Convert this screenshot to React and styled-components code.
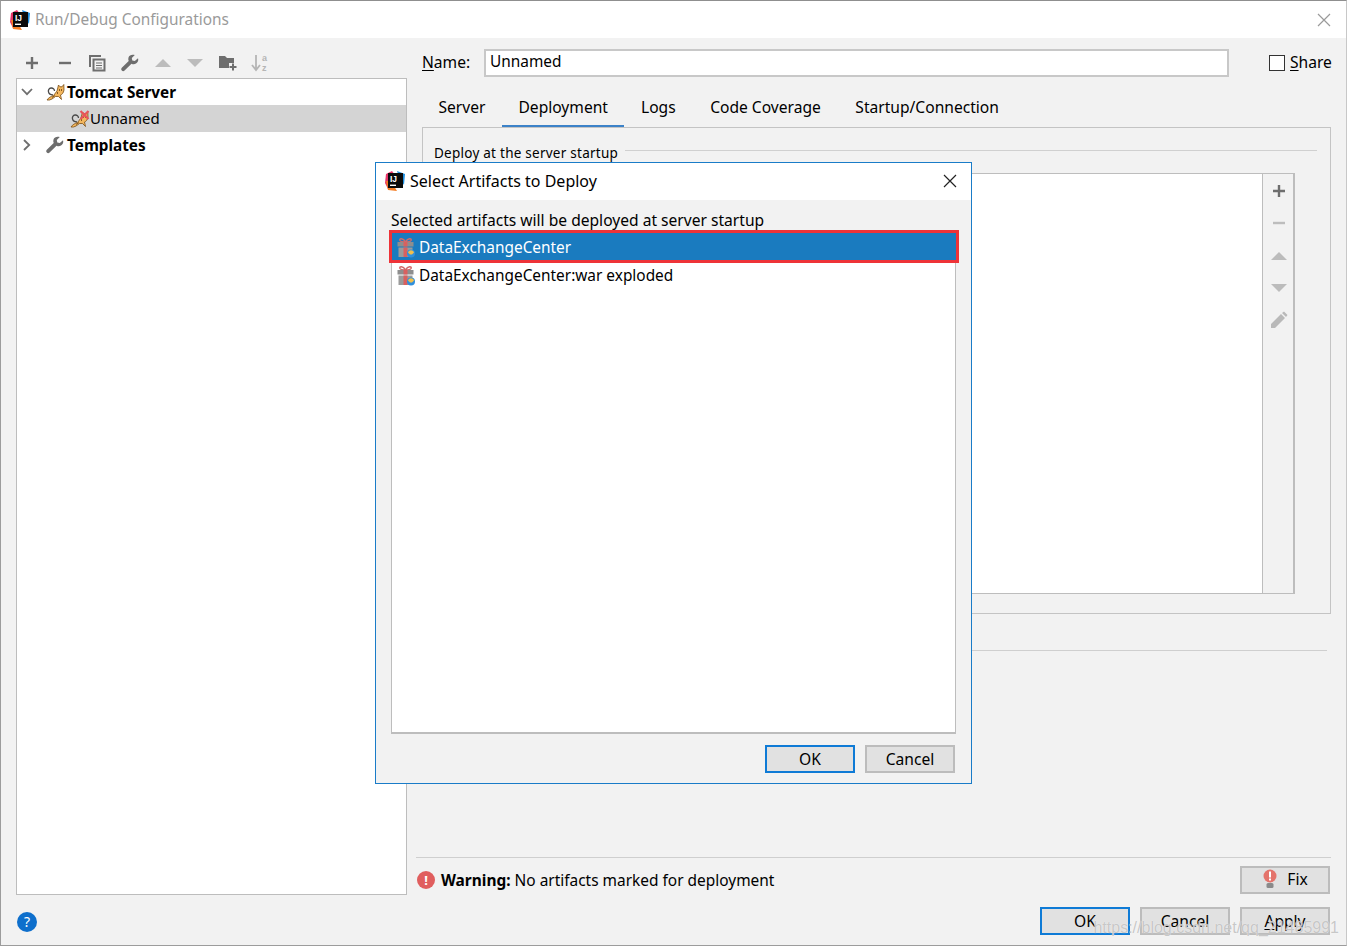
import React from "react";
import styled, { createGlobalStyle } from "styled-components";

const Global = createGlobalStyle`
  html, body { margin: 0; padding: 0; background: #f2f2f2; }
  body { font-family: "Noto Sans", "Open Sans", sans-serif; font-size: 15.6px; color: #000; }
  * { box-sizing: border-box; }
`;

const Window = styled.div`
  position: relative;
  width: 1347px;
  height: 946px;
  background: #f2f2f2;
  border: 1px solid #9c9c9c;
  border-top-color: #8f8f8f;
  border-right-color: #c8c8c8;
  display: flex;
  flex-direction: column;
  overflow: hidden;
`;
const TitleBar = styled.div`
  height: 37px;
  flex: none;
  background: #fff;
  display: flex;
  align-items: center;
  padding: 0 12px 0 9px;
  gap: 5px;
`;
const TitleText = styled.span`
  color: ${(p) => p.$color || "#9a9a9a"};
  font-size: ${(p) => p.$size || 15.4}px;
  line-height: 20px;
  flex: 1;
`;
const Close = styled.button`
  width: 20px;
  height: 20px;
  padding: 0;
  border: 0;
  background: none;
  display: flex;
  align-items: center;
  justify-content: center;
`;
const Main = styled.div`
  flex: 1;
  display: flex;
  min-height: 0;
  padding: 0 15px 0 15px;
`;
const LeftCol = styled.div`
  width: 391px;
  flex: none;
  display: flex;
  flex-direction: column;
`;
const Toolbar = styled.div`
  height: 40px;
  flex: none;
  display: flex;
  align-items: center;
  padding: 10px 0 0 4px;
  gap: 8.7px;
`;
const ToolSlot = styled.span`
  width: 24px;
  height: 24px;
  display: flex;
  align-items: center;
  justify-content: center;
`;
const Tree = styled.div`
  height: 817px;
  flex: none;
  background: #fff;
  border: 1px solid #bdbdbd;
`;
const TreeRow = styled.div`
  height: ${(p) => p.$h}px;
  display: flex;
  align-items: center;
  padding-left: ${(p) => p.$indent}px;
  background: ${(p) => (p.$selected ? "#d4d4d4" : "transparent")};
  font-weight: ${(p) => (p.$bold ? 700 : 400)};
  font-size: ${(p) => (p.$bold ? 15.3 : 15)}px;
`;
const TreeLabel = styled.span`
  padding-bottom: 2px;
`;
const Chevron = styled.span`
  width: 20px;
  margin-right: 9px;
  display: flex;
  justify-content: center;
`;
const TreeIcon = styled.span`
  width: 21px;
  flex: none;
  display: flex;
  align-items: center;
`;
const HelpCircle = styled.div`
  width: 20px;
  height: 20px;
  margin: 17px 0 0 1px;
  border-radius: 50%;
  background: #0e6fcc;
  color: #fff;
  font-size: 14px;
  line-height: 20px;
  text-align: center;
`;
const RightCol = styled.div`
  flex: 1;
  min-width: 0;
  display: flex;
  flex-direction: column;
`;
const NameRow = styled.div`
  height: 28px;
  margin-top: 11px;
  display: flex;
  align-items: center;
  padding-left: 15px;
`;
const NameLabel = styled.span`
  width: 62px;
  flex: none;
  padding-bottom: 2px;
`;
const ShareLabel = styled.span`
  flex: none;
  padding-bottom: 2px;
  white-space: nowrap;
`;
const U = styled.span`
  text-decoration: underline;
  text-underline-offset: 2px;
`;
const NameInput = styled.div`
  width: 745px;
  height: 28px;
  flex: none;
  background: #fff;
  border: 2px solid #c8c8c8;
  padding: 0 4px;
  font-size: 15.4px;
  line-height: 22px;
`;
const ShareBox = styled.span`
  width: 16px;
  height: 16px;
  margin-left: 40px;
  margin-right: 5px;
  background: #fff;
  border: 1px solid #333;
  flex: none;
`;
const Tabs = styled.div`
  height: 40px;
  margin-top: 11px;
  margin-left: 15px;
  display: flex;
`;
const Tab = styled.div`
  height: 40px;
  padding: 0 ${(p) => p.$pad ?? 16.5}px;
  line-height: 38px;
  border-bottom: 3px solid ${(p) => (p.$active ? "#3c82c8" : "transparent")};
`;
const Panel = styled.div`
  margin: -1px 0 0 15px;
  width: 909px;
  height: 487px;
  border: 1px solid #c4c4c4;
  padding: 15px 12px 0 11px;
`;
const FieldLegend = styled.div`
  display: flex;
  align-items: center;
  font-size: 13.5px;
  letter-spacing: 0.25px;
  line-height: 20px;
  height: 20px;
  gap: 7px;
  margin-right: 1px;
`;
const LegendLine = styled.span`
  flex: 1;
  height: 1px;
  margin-top: -6px;
  background: #d0d0d0;
`;
const DeployBox = styled.div`
  width: 861px;
  height: 421px;
  margin-top: 10px;
  background: #fff;
  border: 1px solid #bdbdbd;
  border-right-width: 2px;
  display: flex;
  justify-content: flex-end;
`;
const DeployTools = styled.div`
  width: 31px;
  background: #f2f2f2;
  border-left: 1px solid #bdbdbd;
  display: flex;
  flex-direction: column;
  align-items: center;
  padding: 5px 0 0 1px;
  gap: 8.3px;
`;
const Rule = styled.div`
  height: 1px;
  background: #cfcfcf;
  margin-left: ${(p) => p.$left}px;
  margin-right: ${(p) => p.$right}px;
  margin-top: ${(p) => p.$top}px;
`;
const WarnRow = styled.div`
  height: 37px;
  margin-top: 3px;
  display: flex;
  align-items: center;
  padding: 0 1px 0 10px;
`;
const WarnIcon = styled.span`
  width: 18px;
  height: 18px;
  border-radius: 50%;
  background: #e05e5e;
  color: #fff;
  font-weight: 700;
  font-size: 13px;
  line-height: 18px;
  text-align: center;
  margin-right: 6px;
  flex: none;
`;
const WarnText = styled.span`
  flex: 1;
  font-size: 15.45px;
`;
const Btn = styled.button`
  width: 90px;
  height: 28px;
  background: #e1e1e1;
  border: 2px solid ${(p) => (p.$default ? "#0f7bd6" : "#bcbcbc")};
  font: inherit;
  font-size: 15.6px;
  color: #000;
  padding: 0 0 1px;
  display: flex;
  align-items: center;
  justify-content: center;
  gap: 9px;
`;
const ActionRow = styled.div`
  display: flex;
  justify-content: flex-end;
  gap: 10px;
  padding-right: 1px;
  margin-top: ${(p) => p.$top ?? 0}px;
`;
const Dialog = styled.div`
  position: absolute;
  left: 374px;
  top: 161px;
  width: 597px;
  height: 622px;
  background: #f2f2f2;
  border: 1px solid #1a7cc8;
  display: flex;
  flex-direction: column;
`;
const DialogTitle = styled.div`
  height: 37px;
  flex: none;
  background: #fff;
  display: flex;
  align-items: center;
  padding: 0 11px 2px 9px;
  gap: 5px;
`;
const DialogBody = styled.div`
  flex: 1;
  padding: 10px 15px 10px 15px;
  display: flex;
  flex-direction: column;
`;
const DialogLabel = styled.div`
  height: 20px;
  line-height: 20px;
`;
const List = styled.div`
  width: 565px;
  height: 504px;
  background: #fff;
  border: 1px solid #bdbdbd;
  border-bottom-width: 2px;
`;
const ListRow = styled.div`
  height: ${(p) => p.$h}px;
  display: flex;
  align-items: center;
  padding-left: ${(p) => (p.$selected ? 6 : 4)}px;
  padding-top: ${(p) => (p.$selected ? 2 : 0)}px;
  gap: 3px;
  font-size: 15.4px;
  background: ${(p) => (p.$selected ? "#1a7bbf" : "transparent")};
  color: ${(p) => (p.$selected ? "#fff" : "#000")};
  ${(p) =>
    p.$selected &&
    "margin: 0 -3px 0 -2px; outline: 3px solid #ee3338; outline-offset: -2px; position: relative;"}
`;
const Watermark = styled.div`
  position: absolute;
  right: 7px;
  bottom: 8px;
  font-family: "Liberation Sans", sans-serif;
  font-size: 16px;
  color: rgba(185, 185, 185, 0.8);
  text-shadow: 0 0 1px #fff;
  pointer-events: none;
`;

const IJ = () => (
  <svg width="20" height="20" viewBox="0 0 20 20">
    <path d="M1 3 L7 0 L10 4 L3 18 L0 12Z" fill="#e8356a" />
    <path d="M12 0 L20 3 L19 14 L14 6Z" fill="#1d8fe1" />
    <path d="M1 10 L3 19 L12 20 L6 10Z" fill="#f57d23" />
    <rect x="3" y="2" width="15" height="15" fill="#0a0a0a" />
    <rect x="5" y="13.6" width="6" height="1.4" fill="#fff" />
    <text x="5" y="11" fontFamily="Liberation Sans, sans-serif" fontWeight="700" fontSize="8.5" fill="#fff">IJ</text>
  </svg>
);
const X = ({ c = "#8a8a8a", s = 14, w = 1.2 }) => (
  <svg width={s} height={s} viewBox="0 0 14 14">
    <path d="M1 1 L13 13 M13 1 L1 13" stroke={c} strokeWidth={w} fill="none" />
  </svg>
);
const Plus = ({ c = "#6e6e6e" }) => (
  <svg width="14" height="14" viewBox="0 0 14 14"><path d="M7 1V13M1 7H13" stroke={c} strokeWidth="2.4" /></svg>
);
const Minus = ({ c = "#6e6e6e" }) => (
  <svg width="14" height="14" viewBox="0 0 14 14"><path d="M1 7H13" stroke={c} strokeWidth="2.4" /></svg>
);
const Copy = () => (
  <svg width="18" height="18" viewBox="0 0 18 18" fill="none">
    <path d="M13 2H2V13" stroke="#6e6e6e" strokeWidth="2" />
    <rect x="5.5" y="5.5" width="11" height="11" stroke="#6e6e6e" strokeWidth="2" />
    <path d="M8 9H14M8 11.5H14M8 14H14" stroke="#6e6e6e" strokeWidth="1.2" />
  </svg>
);
const Wrench = ({ s = 18 }) => (
  <svg width={s} height={s} viewBox="0 0 18 18">
    <path d="M17 4.2 L13.8 7 L11.3 6.5 L10.8 4 L13.8 1.1 C11.3 0 8.3 1 7.5 3.4 C7.1 4.6 7.2 5.8 7.7 6.9 L0.8 13.8 C0 14.7 0 15.7 0.8 16.6 C1.6 17.4 2.7 17.4 3.6 16.6 L10.5 9.7 C12.9 10.9 15.5 10 16.7 7.8 C17.3 6.7 17.4 5.4 17 4.2Z" fill="#6e6e6e" />
  </svg>
);
const Tri = ({ dir = "up", c = "#bcbcbc" }) => (
  <svg width="16" height="10" viewBox="0 0 16 10">
    <path d={dir === "up" ? "M0 9 L8 1 L16 9Z" : "M0 1 L16 1 L8 9Z"} fill={c} />
  </svg>
);
const FolderPlus = () => (
  <svg width="19" height="16" viewBox="0 0 19 16">
    <path d="M0 1H6L8 3H15V8H10V13H0Z" fill="#6e6e6e" />
    <path d="M14 8.5V15.5M10.5 12H17.5" stroke="#6e6e6e" strokeWidth="2" />
  </svg>
);
const SortAZ = () => (
  <svg width="19" height="18" viewBox="0 0 19 18" fill="none">
    <path d="M5 1V15M1 11L5 16L9 11" stroke="#b5b5b5" strokeWidth="1.8" />
    <text x="11" y="7" fontFamily="Liberation Sans, sans-serif" fontWeight="700" fontSize="9" fill="#b5b5b5">a</text>
    <text x="11" y="17" fontFamily="Liberation Sans, sans-serif" fontWeight="700" fontSize="9" fill="#b5b5b5">z</text>
  </svg>
);
const Pencil = () => (
  <svg width="18" height="18" viewBox="0 0 18 18">
    <path d="M1 13 L11 3 L15 7 L5 17 L1 17Z M12 2 L14 0.5 L17.5 4 L16 6Z" fill="#b9b9b9" />
  </svg>
);
const ChevDown = () => (
  <svg width="12" height="8" viewBox="0 0 12 8"><path d="M1 1 L6 6.2 L11 1" stroke="#6e6e6e" strokeWidth="1.8" fill="none" /></svg>
);
const ChevRight = () => (
  <svg width="8" height="12" viewBox="0 0 8 12"><path d="M1 1 L6.2 6 L1 11" stroke="#6e6e6e" strokeWidth="1.8" fill="none" /></svg>
);
const Tomcat = ({ bad }) => (
  <svg width="20" height="18" viewBox="0 0 20 18" fill="none">
    <path d="M7 12 C1.5 12 1 5.5 5 5 C7 4.8 8.5 6.2 8.5 8" stroke="#4a4a4a" strokeWidth="1.3" />
    <path d="M1 17 C2.5 14.5 5 13.5 7.5 12.5 L11 8 L12.5 2 L14 3.8 L16 3.8 L17.8 1.5 L18 7 C17.5 10 16 11.5 14.5 12 L15.5 16.5 L12.5 13.5 L9.5 13.5 L6 16 L3.5 17Z" fill="#f3b75e" stroke="#7a4e16" strokeWidth="0.8" />
    <path d="M13.5 6V8M15.5 6V8M11.5 9V11M6 14.5L9 12.5" stroke="#6b4310" strokeWidth="0.8" />
    {bad && <path d="M10.5 1 L18.5 9 M18.5 1 L10.5 9" stroke="#e8545a" strokeWidth="2.2" />}
  </svg>
);
const Gift = () => (
  <svg width="20" height="20" viewBox="0 0 20 20" fill="none">
    <path d="M9.5 4 C7 0 3 0 4 2.5 C4.6 3.8 7 4 9.5 4 C12 0 16 0 15 2.5 C14.4 3.8 12 4 9.5 4Z" stroke="#d06a6a" strokeWidth="1.5" />
    <rect x="1.5" y="4" width="16" height="4.5" fill="#8e8e8e" />
    <rect x="2.5" y="9.5" width="14" height="9.5" fill="#9b9b9b" />
    <rect x="7.5" y="4" width="4" height="4.5" fill="#d9605f" />
    <rect x="7.5" y="9.5" width="4" height="9.5" fill="#d9605f" />
    <circle cx="15" cy="15.5" r="4" fill="#2f8fdc" />
    <path d="M12 14.5 C13 11.5 17 11.5 18 14.5 L16 16.5 L14 16.5Z" fill="#f2bf4a" />
  </svg>
);
const Bulb = () => (
  <svg width="16" height="20" viewBox="0 0 16 20">
    <circle cx="8" cy="7" r="6.5" fill="#e4736b" />
    <rect x="7" y="2.5" width="2" height="6" fill="#fff" />
    <rect x="7" y="9.5" width="2" height="2" fill="#fff" />
    <rect x="4.5" y="14" width="7" height="5" rx="1.5" fill="#8a8a8a" />
  </svg>
);

export default function App() {
  return (
    <>
      <Global />
      <Window>
        <TitleBar>
          <IJ />
          <TitleText>Run/Debug Configurations</TitleText>
          <Close aria-label="close"><X c="#9a9a9a" /></Close>
        </TitleBar>
        <Main>
          <LeftCol>
            <Toolbar>
              <ToolSlot><Plus /></ToolSlot>
              <ToolSlot><Minus /></ToolSlot>
              <ToolSlot><Copy /></ToolSlot>
              <ToolSlot><Wrench /></ToolSlot>
              <ToolSlot><Tri /></ToolSlot>
              <ToolSlot><Tri dir="down" /></ToolSlot>
              <ToolSlot><FolderPlus /></ToolSlot>
              <ToolSlot><SortAZ /></ToolSlot>
            </Toolbar>
            <Tree>
              <TreeRow $h={26} $indent={0} $bold>
                <Chevron><ChevDown /></Chevron>
                <TreeIcon><Tomcat /></TreeIcon>Tomcat Server
              </TreeRow>
              <TreeRow $h={27} $indent={53} $selected><Tomcat bad /><TreeLabel>Unnamed</TreeLabel></TreeRow>
              <TreeRow $h={26} $indent={0} $bold>
                <Chevron><ChevRight /></Chevron>
                <TreeIcon><Wrench /></TreeIcon>Templates
              </TreeRow>
            </Tree>
            <HelpCircle>?</HelpCircle>
          </LeftCol>
          <RightCol>
            <NameRow>
              <NameLabel><U>N</U>ame:</NameLabel>
              <NameInput>Unnamed</NameInput>
              <ShareBox />
              <ShareLabel><U>S</U>hare</ShareLabel>
            </NameRow>
            <Tabs>
              <Tab>Server</Tab>
              <Tab $active>Deployment</Tab>
              <Tab>Logs</Tab>
              <Tab $pad={18}>Code Coverage</Tab>
              <Tab>Startup/Connection</Tab>
            </Tabs>
            <Panel>
              <FieldLegend>Deploy at the server startup<LegendLine /></FieldLegend>
              <DeployBox>
                <DeployTools>
                  <ToolSlot><Plus /></ToolSlot>
                  <ToolSlot><Minus c="#bdbdbd" /></ToolSlot>
                  <ToolSlot><Tri /></ToolSlot>
                  <ToolSlot><Tri dir="down" /></ToolSlot>
                  <ToolSlot><Pencil /></ToolSlot>
                </DeployTools>
              </DeployBox>
            </Panel>
            <Rule $left={15} $right={4} $top={36} />
            <Rule $left={9} $right={0} $top={206} />
            <WarnRow>
              <WarnIcon>!</WarnIcon>
              <WarnText><b>Warning:</b> No artifacts marked for deployment</WarnText>
              <Btn><Bulb />Fix</Btn>
            </WarnRow>
            <ActionRow $top={9}>
              <Btn $default>OK</Btn>
              <Btn>Cancel</Btn>
              <Btn><span><U>A</U>pply</span></Btn>
            </ActionRow>
          </RightCol>
        </Main>
        <Dialog>
          <DialogTitle>
            <IJ />
            <TitleText $color="#000" $size={16}>Select Artifacts to Deploy</TitleText>
            <Close aria-label="close"><X c="#222" /></Close>
          </DialogTitle>
          <DialogBody>
            <DialogLabel>Selected artifacts will be deployed at server startup</DialogLabel>
            <List>
              <ListRow $h={31} $selected><Gift />DataExchangeCenter</ListRow>
              <ListRow $h={27}><Gift />DataExchangeCenter:war exploded</ListRow>
            </List>
            <ActionRow $top={11}>
              <Btn $default>OK</Btn>
              <Btn>Cancel</Btn>
            </ActionRow>
          </DialogBody>
        </Dialog>
        <Watermark>https://blog.csdn.net/qq_21485991</Watermark>
      </Window>
    </>
  );
}
